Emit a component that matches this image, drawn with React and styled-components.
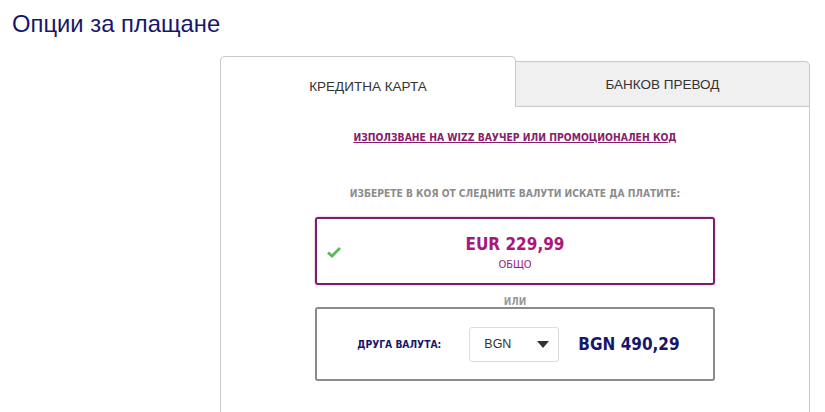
import styled, { createGlobalStyle } from "styled-components";

const GlobalStyle = createGlobalStyle`
  body {
    margin: 0;
    background: #ffffff;
    font-family: "Liberation Sans", Arial, sans-serif;
  }
`;

const Page = styled.div`
  width: 825px;
  height: 412px;
  overflow: hidden;
  background: #ffffff;
`;

const Title = styled.h1`
  margin: 0;
  padding: 10px 0 0 12px;
  height: 56px;
  box-sizing: border-box;
  font-family: "Liberation Sans", Arial, sans-serif;
  font-size: 23.8px;
  font-weight: 400;
  color: #16166b;
`;

const Panel = styled.div`
  margin-left: 220px;
  width: 590px;
`;

const Tabs = styled.div`
  display: flex;
  align-items: flex-end;
  height: 51px;
`;

const Tab = styled.div`
  box-sizing: border-box;
  display: flex;
  align-items: center;
  justify-content: center;
  width: ${(p) => (p.$active ? "296px" : "294px")};
  height: ${(p) => (p.$active ? "51px" : "46px")};
  padding-top: ${(p) => (p.$active ? "9px" : "0")};
  border: 1px solid #c8c8c8;
  border-bottom: ${(p) => (p.$active ? "none" : "1px solid #c8c8c8")};
  border-radius: ${(p) => (p.$active ? "5px 5px 0 0" : "0 5px 0 0")};
  border-left: ${(p) => (p.$active ? "1px solid #c8c8c8" : "none")};
  background: ${(p) => (p.$active ? "#ffffff" : "#f0f0f0")};
  font-family: "Liberation Sans", Arial, sans-serif;
  font-size: 13.5px;
  color: #333333;
`;

const Body = styled.div`
  box-sizing: border-box;
  height: 320px;
  border-left: 1px solid #c8c8c8;
  border-right: 1px solid #c8c8c8;
  display: flex;
  flex-direction: column;
  align-items: center;
  padding-top: 24px;
`;

const PromoLink = styled.a`
  font-family: "DejaVu Sans Condensed", "DejaVu Sans", sans-serif;
  font-size: 10.3px;
  font-weight: 700;
  color: #8a1c6c;
  text-decoration: underline;
  cursor: pointer;
`;

const Hint = styled.div`
  margin-top: 45px;
  font-family: "DejaVu Sans Condensed", "DejaVu Sans", sans-serif;
  font-size: 10.2px;
  font-weight: 700;
  color: #8c8c8c;
`;

const OptionBox = styled.div`
  position: relative;
  box-sizing: border-box;
  width: 400px;
  height: ${(p) => p.$h};
  margin-top: ${(p) => p.$mt};
  border: 2px solid ${(p) => (p.$selected ? "#7b1f6c" : "#8a8a8a")};
  border-radius: 3px;
  display: flex;
  align-items: center;
  justify-content: center;
  box-shadow: ${(p) => (p.$selected ? "0 0 2px rgba(180, 30, 140, 0.5)" : "none")};
`;

const Check = styled.svg`
  position: absolute;
  left: 9px;
  top: 26px;
`;

const Amount = styled.div`
  display: flex;
  flex-direction: column;
  align-items: center;
  padding-top: 2px;
`;

const Price = styled.div`
  font-family: "DejaVu Sans Condensed", "DejaVu Sans", sans-serif;
  font-size: 17px;
  font-weight: 700;
  color: ${(p) => p.$color};
`;

const Total = styled.div`
  margin-top: 4px;
  font-family: "DejaVu Sans Condensed", "DejaVu Sans", sans-serif;
  font-size: 11px;
  color: #9a1a78;
`;

const Or = styled.div`
  margin-top: 11px;
  font-family: "DejaVu Sans Condensed", "DejaVu Sans", sans-serif;
  font-size: 10px;
  font-weight: 700;
  color: #9a9a9a;
`;

const OtherRow = styled.div`
  display: flex;
  align-items: center;
  padding-left: 7px;
`;

const OtherLabel = styled.div`
  width: 112px;
  font-family: "DejaVu Sans Condensed", "DejaVu Sans", sans-serif;
  font-size: 10.2px;
  font-weight: 700;
  color: #16166b;
`;

const Select = styled.div`
  box-sizing: border-box;
  width: 90px;
  height: 35px;
  border: 1px solid #dcdcdc;
  border-radius: 3px;
  display: flex;
  align-items: center;
  justify-content: space-between;
  padding: 0 9px 0 14px;
  margin-right: 19px;
  font-family: "Liberation Sans", Arial, sans-serif;
  font-size: 12.5px;
  color: #333333;
`;

const Caret = styled.span`
  width: 0;
  height: 0;
  border-left: 6px solid transparent;
  border-right: 6px solid transparent;
  border-top: 7px solid #333333;
`;

export default function App() {
  return (
    <Page>
      <GlobalStyle />
      <Title>Опции за плащане</Title>
      <Panel>
        <Tabs>
          <Tab $active>КРЕДИТНА КАРТА</Tab>
          <Tab>БАНКОВ ПРЕВОД</Tab>
        </Tabs>
        <Body>
          <PromoLink>ИЗПОЛЗВАНЕ НА WIZZ ВАУЧЕР ИЛИ ПРОМОЦИОНАЛЕН КОД</PromoLink>
          <Hint>ИЗБЕРЕТЕ В КОЯ ОТ СЛЕДНИТЕ ВАЛУТИ ИСКАТЕ ДА ПЛАТИТЕ:</Hint>
          <OptionBox $selected $h="68px" $mt="18px">
            <Check width="16" height="14" viewBox="0 0 16 14">
              <path d="M2 7.5 L6 11 L14 3" fill="none" stroke="#5cb85c" strokeWidth="2.8" />
            </Check>
            <Amount>
              <Price $color="#a8177c">EUR 229,99</Price>
              <Total>ОБЩО</Total>
            </Amount>
          </OptionBox>
          <Or>ИЛИ</Or>
          <OptionBox $h="74px" $mt="0px">
            <OtherRow>
              <OtherLabel>ДРУГА ВАЛУТА:</OtherLabel>
              <Select>
                BGN
                <Caret />
              </Select>
              <Price $color="#16166b">BGN 490,29</Price>
            </OtherRow>
          </OptionBox>
        </Body>
      </Panel>
    </Page>
  );
}
